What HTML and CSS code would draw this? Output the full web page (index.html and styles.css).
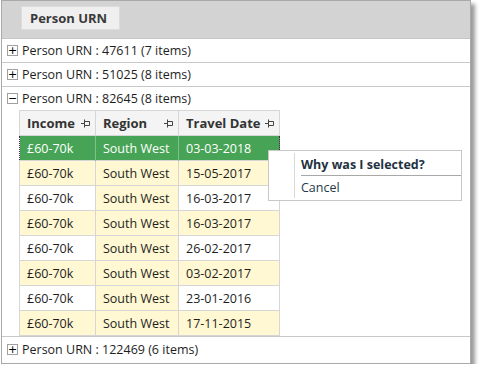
FILE: index.html
```html
<!DOCTYPE html>
<html lang="en">
<head>
<meta charset="UTF-8">
<title>Grouped Grid</title>
<link rel="stylesheet" href="styles.css">
</head>
<body>
<div class="grid">
  <div class="group-panel">
    <span class="group-chip">Person URN</span>
  </div>

  <div class="group-row"><span class="toggle">+</span>Person URN : 47611 (7 items)</div>
  <div class="group-row"><span class="toggle">+</span>Person URN : 51025 (8 items)</div>
  <div class="group-row open"><span class="toggle">&minus;</span>Person URN : 82645 (8 items)</div>

  <div class="detail">
    <table class="data">
      <thead>
        <tr>
          <th class="c-income">Income <svg class="pin" viewBox="0 0 10 9"><path d="M0 4.5H3.5M3.5 0.5V8.5M3.5 2.5H8.5V6.5H3.5"/></svg></th>
          <th class="c-region">Region <svg class="pin" viewBox="0 0 10 9"><path d="M0 4.5H3.5M3.5 0.5V8.5M3.5 2.5H8.5V6.5H3.5"/></svg></th>
          <th class="c-date">Travel Date <svg class="pin" viewBox="0 0 10 9"><path d="M0 4.5H3.5M3.5 0.5V8.5M3.5 2.5H8.5V6.5H3.5"/></svg></th>
        </tr>
      </thead>
      <tbody>
        <tr class="selected"><td>£60-70k</td><td class="reg">South West</td><td>03-03-2018</td></tr>
        <tr class="alt"><td>£60-70k</td><td class="reg">South West</td><td>15-05-2017</td></tr>
        <tr><td>£60-70k</td><td class="reg">South West</td><td>16-03-2017</td></tr>
        <tr class="alt"><td>£60-70k</td><td class="reg">South West</td><td>16-03-2017</td></tr>
        <tr><td>£60-70k</td><td class="reg">South West</td><td>26-02-2017</td></tr>
        <tr class="alt"><td>£60-70k</td><td class="reg">South West</td><td>03-02-2017</td></tr>
        <tr><td>£60-70k</td><td class="reg">South West</td><td>23-01-2016</td></tr>
        <tr class="alt"><td>£60-70k</td><td class="reg">South West</td><td>17-11-2015</td></tr>
      </tbody>
    </table>
  </div>

  <div class="group-row last"><span class="toggle">+</span>Person URN : 122469 (6 items)</div>

  <div class="menu">
    <div class="menu-item title">Why was I selected?</div>
    <div class="menu-item">Cancel</div>
  </div>
</div>
</body>
</html>
```

FILE: styles.css
```css
body {
  margin: 0;
  background: #fff;
  font-family: "Open Sans", "Noto Sans", sans-serif;
  font-size: 12.5px;
  color: #1e1e1e;
}

.grid {
  position: relative;
  width: 468px;
  height: 362px;
  margin-left: 1px;
  border: 1px solid #a9a9a9;
  background: #fff;
  box-shadow: 4px 4px 4px rgba(0, 0, 0, 0.4);
}

.group-panel {
  height: 38px;
  background: #d3d3d3;
  border-bottom: 1px solid #c4c4c4;
  padding: 5px 0 0 19px;
  box-sizing: border-box;
}

.group-chip {
  display: inline-block;
  width: 99px;
  height: 24px;
  line-height: 23px;
  box-sizing: border-box;
  padding-left: 8px;
  background: #efefef;
  border: 1px solid #dcdcdc;
  font-weight: bold;
  font-size: 13px;
  color: #3a3a3a;
}

.group-row {
  display: flex;
  align-items: center;
  height: 23px;
  border-bottom: 1px solid #c8c8c8;
  padding-left: 5px;
  white-space: nowrap;
}

.group-row.open {
  border-bottom: none;
}

.group-row.last {
  border-top: 1px solid #c8c8c8;
  border-bottom: none;
  height: 24px;
}

.toggle {
  display: inline-flex;
  align-items: center;
  justify-content: center;
  width: 9px;
  height: 9px;
  border: 1px solid #a0a0a0;
  margin-right: 4px;
  font-size: 11px;
  line-height: 1;
  color: #000;
  font-family: "DejaVu Sans", sans-serif;
}

.detail {
  padding-left: 17px;
}

.data {
  border-collapse: collapse;
}

.data th,
.data td {
  border: 1px solid #d6d6d6;
  height: 24px;
  padding: 0 0 0 7px;
  text-align: left;
  white-space: nowrap;
}

.data th {
  background: #f4f4f4;
  font-weight: bold;
  color: #333;
  font-size: 13px;
  position: relative;
}

.c-income { width: 68px; }
.c-region { width: 75px; }
.c-date { width: 93px; }

.pin {
  position: absolute;
  right: 4px;
  top: 8px;
  width: 10px;
  height: 9px;
  fill: none;
  stroke: #444;
  stroke-width: 1;
}

.data td.reg,
.data tr.alt td {
  background: #fff8d2;
}

.data tr.selected td {
  background: #47a456;
  color: #fff;
  border-color: #7cc286;
  border-top: 1px dotted #5a1a5a;
  border-bottom: 1px dotted #5a1a5a;
}

.data tr.selected td:first-child {
  border-left: 1px dotted #5a1a5a;
}

.data tr.selected td:last-child {
  border-right: 1px dotted #5a1a5a;
}

.menu {
  position: absolute;
  left: 266px;
  top: 149px;
  width: 192px;
  border: 1px solid #c8c8c8;
  background: #fff;
  padding: 3px 0 2px 0;
}

.menu::before {
  content: "";
  position: absolute;
  left: 25px;
  top: 2px;
  bottom: 2px;
  border-left: 1px solid #d8d8d8;
}

.menu-item {
  margin-left: 32px;
  height: 21px;
  line-height: 21px;
  color: #1f3a4a;
}

.menu-item.title {
  font-weight: bold;
  color: #1e3240;
  border-bottom: 1px solid #a8a8a8;
  margin-bottom: 1px;
}
```
